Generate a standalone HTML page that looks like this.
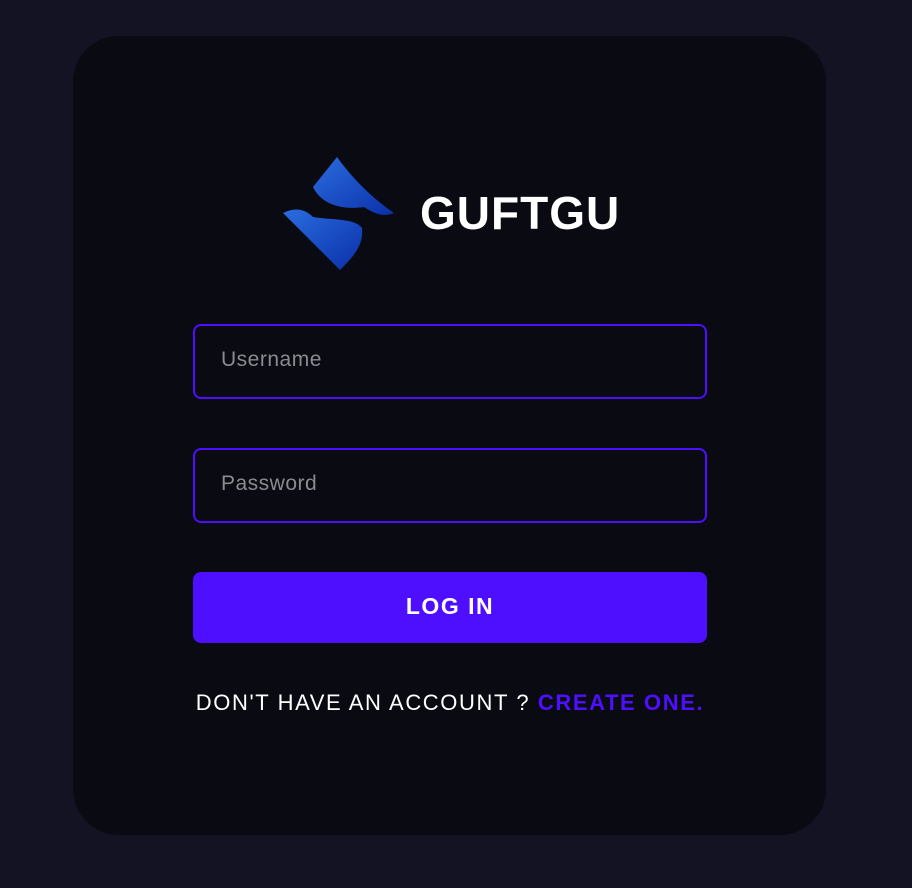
<!DOCTYPE html>
<html><head><style>
html,body{margin:0;padding:0;width:912px;height:888px;background:#131324;font-family:"Liberation Sans",sans-serif;overflow:hidden}
.card{position:absolute;left:73px;top:36px;width:753px;height:799px;background:#0a0a12;border-radius:46px}
.brand{position:absolute;left:420px;top:186px;font-size:46px;font-weight:bold;color:#fff;letter-spacing:1px}
.inp{position:absolute;left:193px;height:71px;border:2px solid #4e0eff;border-radius:8px;width:510px}
.inp span{position:absolute;left:26px;top:22px;font-size:21px;color:#8a8a8f;letter-spacing:0.5px}
.btn{position:absolute;left:193px;top:572px;width:514px;height:71px;background:#4e0eff;border-radius:8px;color:#fff;font-weight:bold;font-size:23px;letter-spacing:1.5px;text-align:center;line-height:69px}
.foot{position:absolute;left:173px;top:690px;width:554px;text-align:center;font-size:22px;letter-spacing:1.6px;color:#fff;white-space:nowrap}
.foot b{color:#4e0eff}
</style></head><body>
<div class="card"></div>
<svg style="position:absolute;left:0;top:0" width="912" height="888">
<defs><linearGradient id="g" x1="0" y1="0" x2="1" y2="1"><stop offset="0" stop-color="#2a6de0"/><stop offset="1" stop-color="#0b2fa8"/></linearGradient></defs>
<path d="M337 157 C352 178 372 198 394 213 C382 218 372 212 364 207 C345 210 322 206 313 187 Z" fill="url(#g)"/>
<path d="M283 213 C295 207 305 209 313 217 C330 220 355 218 362 228 C364 246 352 258 340 270 Z" fill="url(#g)"/>
</svg>
<div class="brand">GUFTGU</div>
<div class="inp" style="top:324px"><span>Username</span></div>
<div class="inp" style="top:448px"><span>Password</span></div>
<div class="btn">LOG IN</div>
<div class="foot">DON'T HAVE AN ACCOUNT ? <b>CREATE ONE.</b></div>
</body></html>
